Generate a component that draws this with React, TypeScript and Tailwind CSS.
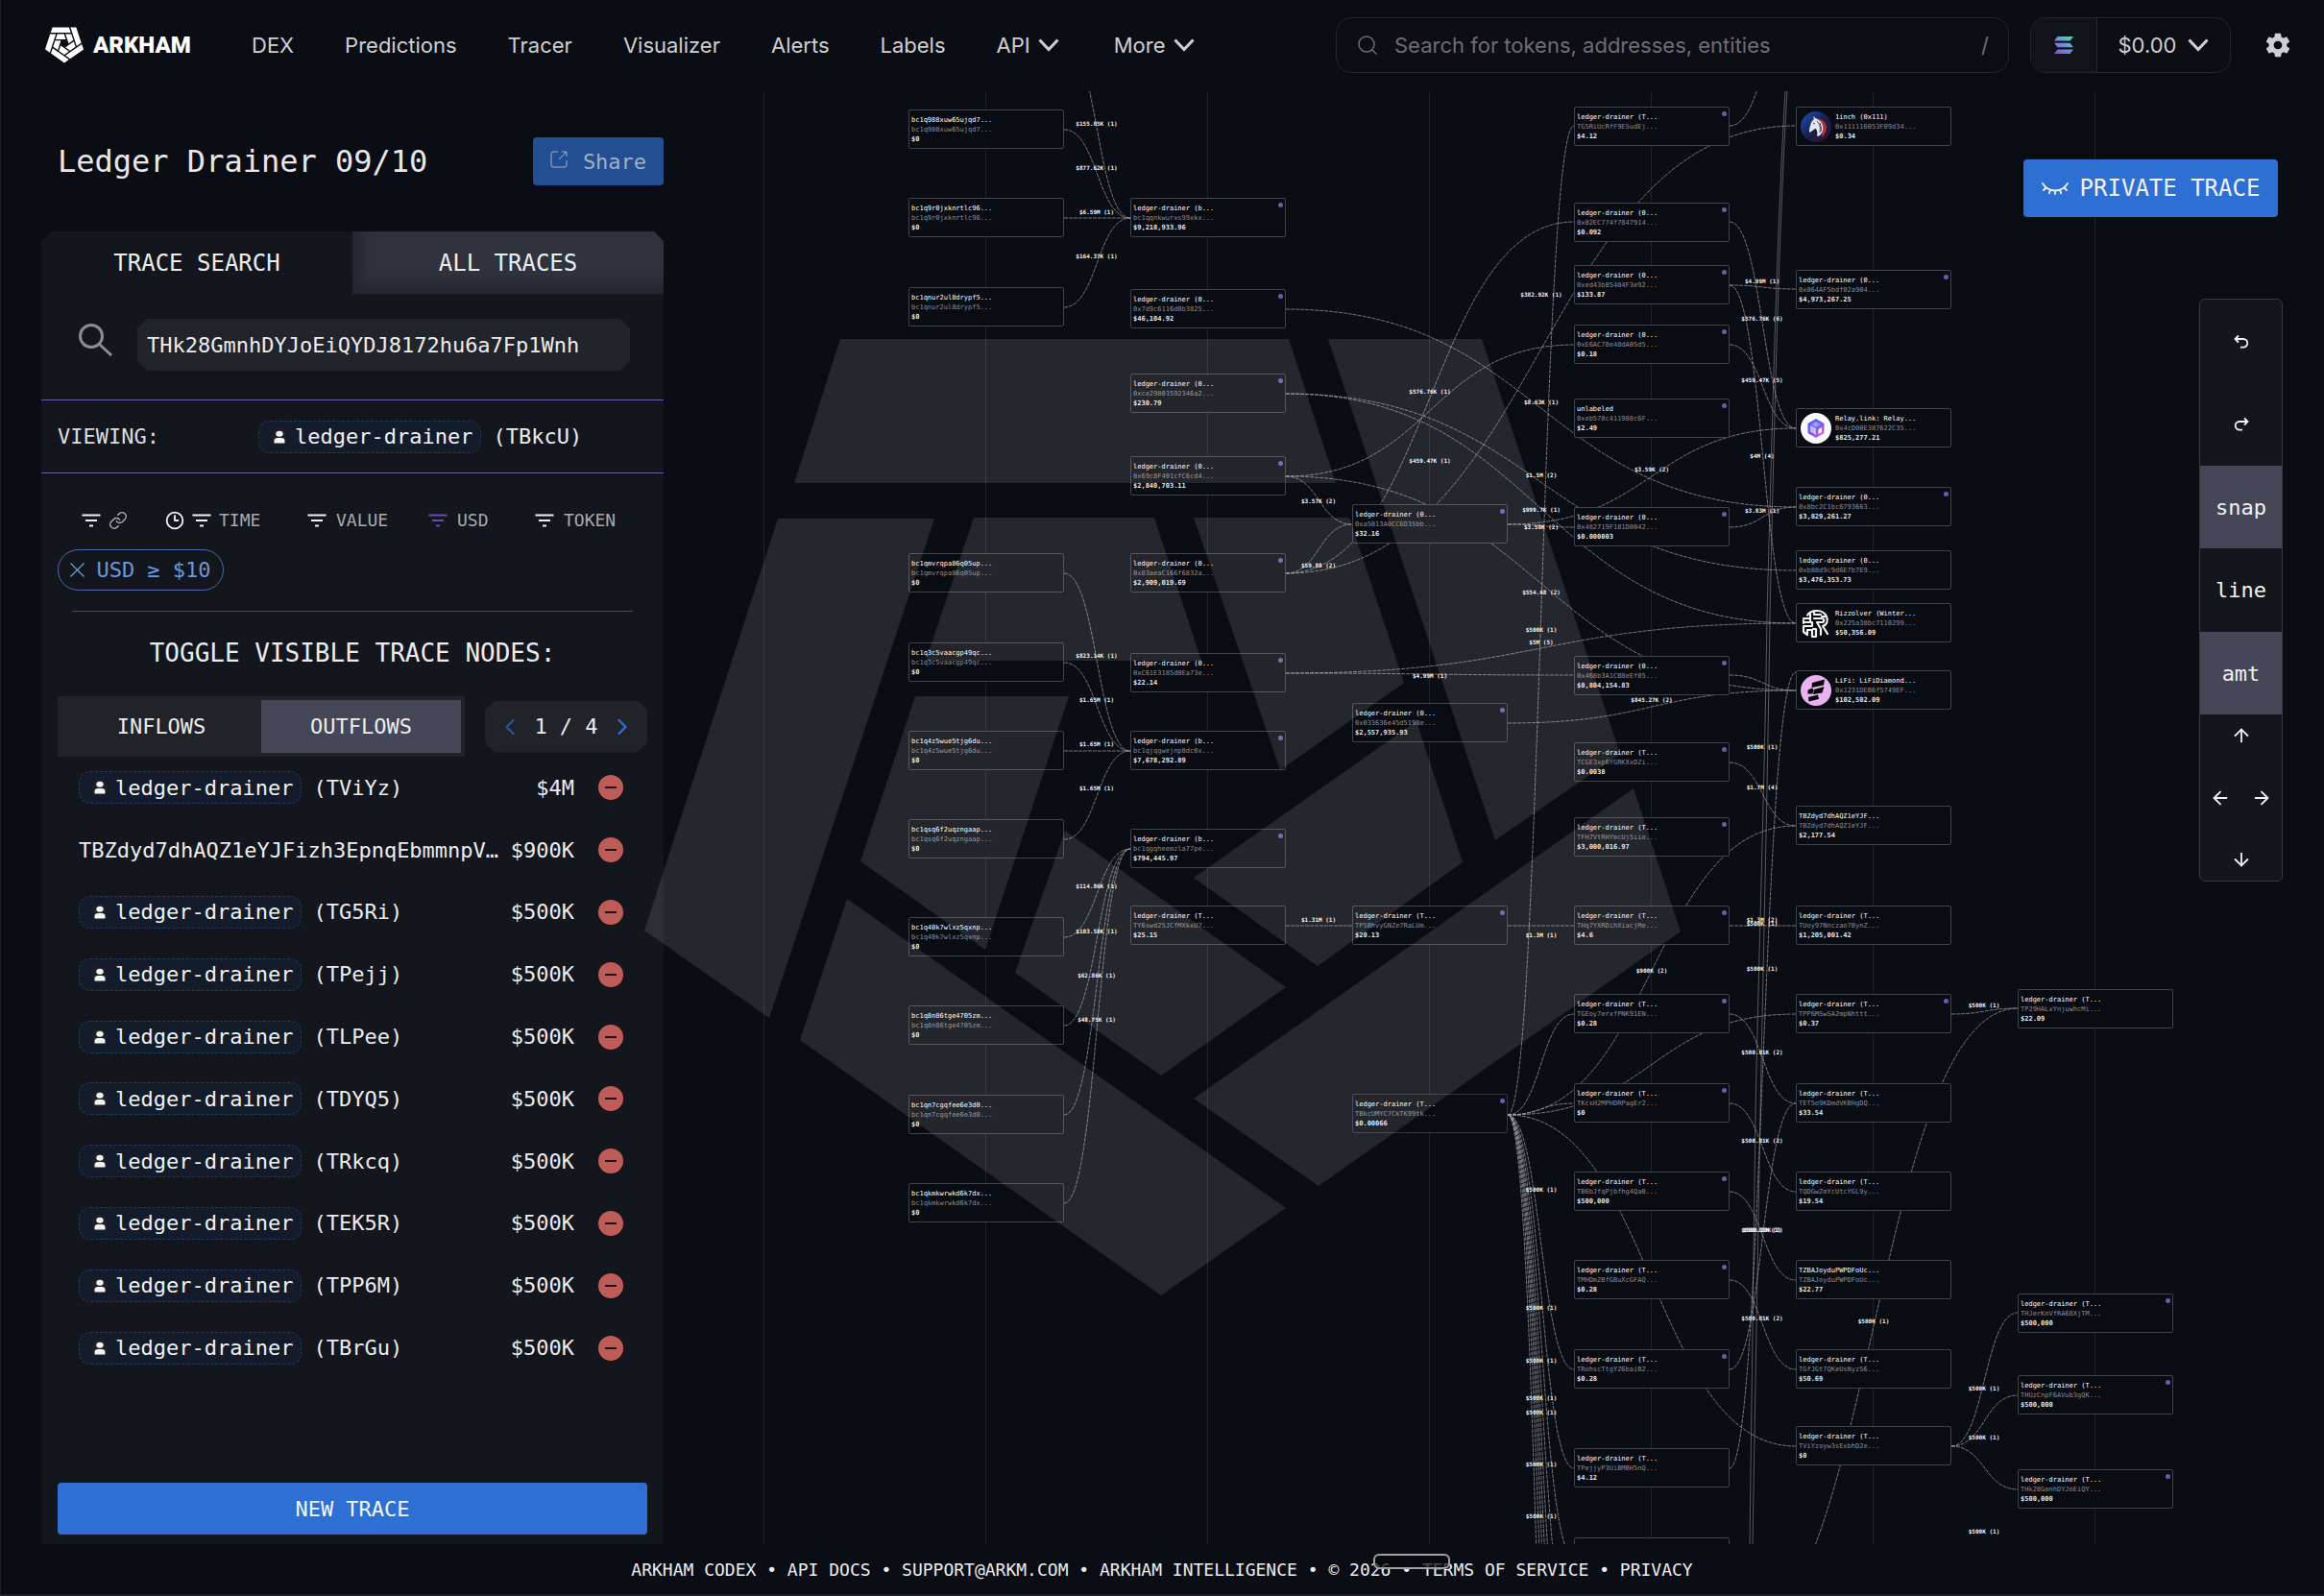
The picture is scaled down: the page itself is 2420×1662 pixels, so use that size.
import React from "react";
import { ArrowDown, ArrowLeft, ArrowRight, ArrowUp, ChevronLeft, ChevronRight, Clock3, Link, Search } from "lucide-react";
import { IoMdSettings } from "react-icons/io";

const SHIELD = [
  "875,353 1342,353 1391,503 827,503",
  "1383,353 1543,353 1687,785 1557,875",
  "1701,821 1750,970 1373,1235 1243,1144",
  "810,540 973,540 801,1060 671,969",
  "1014,539 1202,539 1251,688 964,688",
  "953,725 1113,725 1026,989 896,897",
  "882,936 1339,1258 1209,1349 833,1083",
  "1109,865 1339,1028 1209,1120 1057,1013",
  "1243,539 1405,539 1462,711 1333,802",
  "1475,751 1523,898 1372,1006 1243,914",
];

function Shield({ className }: { className: string }) {
  return (
    <svg viewBox="671 353 1079 996" className={className} fill="currentColor" aria-hidden="true">
      {SHIELD.map((p) => (
        <polygon key={p} points={p} />
      ))}
    </svg>
  );
}

function Caret() {
  return (
    <svg viewBox="0 0 22 14" className="h-3.5 w-[22px]" fill="none" stroke="currentColor" strokeWidth="3" aria-hidden="true">
      <path d="M1.500 1.500L11 11.500l9.500-10" />
    </svg>
  );
}

/* The canvas coordinate system starts this far down the page. */
const TOP = 95;

type NodeData = { x: number; y: number; name: string; addr: string; usd: string; dot?: boolean; icon?: string; active?: boolean };

const C1 = 946, C2 = 1177, C3 = 1408, C4 = 1639, C5 = 1870, C6 = 2101;

const btc = (y: number, addr: string): NodeData => ({ x: C1, y, name: addr, addr, usd: "$0" });
const drn = (x: number, y: number, net: string, addr: string, usd: string, dot = true): NodeData => ({
  x, y, name: `ledger-drainer (${net}...`, addr, usd, dot,
});

const NODES: NodeData[] = [
  btc(114, "bc1q988xuw65ujqd7..."),
  btc(206, "bc1q9r0jxknrtlc96..."),
  btc(299, "bc1qnur2ul8drypf5..."),
  btc(576, "bc1qmvrqpa86q05up..."),
  btc(669, "bc1q3c5vaacgp49qc..."),
  btc(761, "bc1q4z5wue5tjg6du..."),
  btc(853, "bc1qsq6f2uqzngaap..."),
  btc(955, "bc1q40k7wlxz5qxnp..."),
  btc(1047, "bc1q8n86tge4705zm..."),
  btc(1140, "bc1qn7cgqfee6e3d0..."),
  btc(1232, "bc1qkmkwrwkd6k7dx..."),
  drn(C2, 206, "b", "bc1qqnkwurxs99xkx...", "$9,218,933.96"),
  drn(C2, 301, "0", "0x7d9c6116d0b3825...", "$46,104.92"),
  drn(C2, 389, "0", "0xce29803592346a2...", "$230.79"),
  drn(C2, 475, "0", "0x69c8F401cfC6cd4...", "$2,840,703.11"),
  drn(C2, 576, "0", "0x83aeaC166f6832a...", "$2,909,019.69"),
  drn(C2, 680, "0", "0xC61E3185d0Ea73e...", "$22.14"),
  drn(C2, 761, "b", "bc1qjqgwejnp8dc0x...", "$7,678,292.89"),
  drn(C2, 863, "b", "bc1qgqheemzla77pe...", "$794,445.97"),
  drn(C2, 943, "T", "TY6swd25JCfMXkxU7...", "$25.15", false),
  drn(C3, 525, "0", "0xa5013A0CC6D35bb...", "$32.16"),
  drn(C3, 732, "0", "0x033636e45d5198e...", "$2,557,935.93"),
  drn(C3, 943, "T", "TP5BhvyGNZe7RaLUm...", "$20.13"),
  { ...drn(C3, 1139, "T", "TBkcUMYC7CkTK99tk...", "$0.00066"), active: true },
  drn(C4, 111, "T", "TG5RiUcRfF9ESudEj...", "$4.12"),
  drn(C4, 211, "0", "0x02EC774f7847914...", "$0.092"),
  drn(C4, 276, "0", "0xed43b85484F3e92...", "$133.87"),
  drn(C4, 338, "0", "0xE6AC78e48dA05d5...", "$0.18"),
  { x: C4, y: 415, name: "unlabeled", addr: "0xeb578c411908c6F...", usd: "$2.49", dot: true },
  drn(C4, 528, "0", "0x482719F181D0042...", "$0.000003"),
  drn(C4, 683, "0", "0x468b3A1CB8eEf05...", "$8,804,154.83"),
  drn(C4, 773, "T", "TCGE3xp6YGRKXxDZi...", "$0.0038"),
  drn(C4, 851, "T", "TFH7VtRHYmcUj5iio...", "$3,000,016.97"),
  drn(C4, 943, "T", "THq7YXRDihXiacjMe...", "$4.6"),
  drn(C4, 1035, "T", "TGEoy7erxfPNK91EN...", "$0.28"),
  drn(C4, 1128, "T", "TKcsH2MPHDRPagEr2...", "$0"),
  drn(C4, 1220, "T", "TB6bJfqPjbfhg4QaB...", "$500,000"),
  drn(C4, 1312, "T", "TMHDm2BfGBuXcGFAQ...", "$0.28"),
  drn(C4, 1405, "T", "TRohscTtgYZ6baiB2...", "$0.28"),
  drn(C4, 1508, "T", "TPejjyP3UiBMBH5nQ...", "$4.12", false),
  drn(C4, 1601, "T", "", "", false),
  { x: C5, y: 111, name: "1inch (0x111)", addr: "0x111116053F09d34...", usd: "$0.34", icon: "1inch" },
  drn(C5, 281, "0", "0x064AF5bdf02a904...", "$4,973,267.25"),
  { x: C5, y: 425, name: "Relay.link: Relay...", addr: "0x4cD00E387622C35...", usd: "$825,277.21", icon: "relay" },
  drn(C5, 507, "0", "0x8bc2C1bc6793663...", "$3,829,261.27"),
  drn(C5, 573, "0", "0xb88d9c9d6E7b7E9...", "$3,476,353.73", false),
  { x: C5, y: 628, name: "Rizzolver (Winter...", addr: "0x225a38bc7110299...", usd: "$50,356.09", icon: "rizz" },
  { x: C5, y: 698, name: "LiFi: LiFiDiamond...", addr: "0x1231DEB6f5749EF...", usd: "$102,502.09", icon: "lifi" },
  { x: C5, y: 839, name: "TBZdyd7dhAQZ1eYJF...", addr: "TBZdyd7dhAQZ1eYJF...", usd: "$2,177.54" },
  drn(C5, 943, "T", "TUoy97Nnczao7BynZ...", "$1,205,001.42", false),
  drn(C5, 1035, "T", "TPP6MSwSA2mpNhttt...", "$0.37"),
  drn(C5, 1128, "T", "TET5o9KDmdVKBHgDQ...", "$33.54", false),
  drn(C5, 1220, "T", "TQDGwZmYcUtcYGL9y...", "$19.54", false),
  { x: C5, y: 1312, name: "TZBAJoyduPWPDFoUc...", addr: "TZBAJoyduPWPDFoUc...", usd: "$22.77" },
  drn(C5, 1405, "T", "TGfJGt7QKeUsNyz56...", "$50.69", false),
  drn(C5, 1485, "T", "TViYzoyw3sExbhD2e...", "$0", false),
  drn(C6, 1030, "T", "TP29HALxYnjuwhcMi...", "$22.09", false),
  drn(C6, 1347, "T", "THJerKnVfRA68XjTM...", "$500,000"),
  drn(C6, 1432, "T", "THUzCnpF6AVub3gQK...", "$500,000"),
  drn(C6, 1530, "T", "THk28GmnhDYJoEiQY...", "$500,000"),
];

const EDGES: [number, number, number, number][] = [
  [1108, 43, 1177, 227], [1108, 135, 1177, 227], [1108, 227, 1177, 227], [1108, 320, 1177, 227],
  [1108, 597, 1177, 782], [1108, 690, 1177, 782], [1108, 782, 1177, 782], [1108, 874, 1177, 782],
  [1108, 976, 1177, 884], [1108, 1068, 1177, 884], [1108, 1161, 1177, 884], [1108, 1253, 1177, 884],
  [1339, 322, 1870, 528], [1339, 410, 1870, 594], [1339, 410, 1870, 649],
  [1339, 496, 1639, 359], [1339, 496, 1408, 546], [1339, 496, 1870, 719],
  [1339, 597, 1408, 546], [1339, 597, 1639, 231], [1339, 597, 1870, 131],
  [1570, 546, 1639, 549], [1570, 546, 1870, 446],
  [1339, 701, 1870, 649], [1339, 701, 1639, 703], [1570, 753, 1870, 719],
  [1570, 1161, 1639, 131], [1339, 964, 1408, 964], [1570, 964, 1639, 964], [1801, 964, 1870, 964],
  [1570, 1161, 1639, 1056], [1570, 1161, 1870, 860], [1570, 1161, 1870, 1056], [1570, 1161, 1639, 1149],
  [1570, 1161, 1870, 1506], [1570, 1161, 1639, 1426], [1570, 1161, 1639, 1529], [1570, 1161, 1639, 1622],
  [1570, 1161, 1639, 1715], [1570, 1161, 1639, 1808], [1570, 1161, 1639, 1900], [1570, 1161, 1639, 2008],
  [1570, 1161, 1639, 2160], [1570, 1161, 1639, 2400],
  [1801, 131, 1870, 20], [1801, 231, 1870, 446], [1801, 297, 1870, 301], [1801, 297, 1870, 649],
  [1801, 359, 1870, 446], [1801, 549, 1870, 528], [1801, 703, 1870, 719], [1801, 794, 1870, 860],
  [1801, 1056, 1870, 1149], [1801, 1149, 1870, 1241], [1801, 1241, 1870, 1333], [1801, 1333, 1870, 1426],
  [1801, 1426, 1870, 1149], [1801, 1529, 1870, 700],
  [2032, 1056, 2101, 1050], [1801, 1713, 2101, 1050],
  [2032, 1506, 2101, 1367], [2032, 1506, 2101, 1453], [2032, 1506, 2101, 1551],
];

/* Links whose two ends both lie outside the visible part of the canvas. */
const LONG_LINKS = [
  "M1861 95 C1852 250 1848 420 1843 640 C1841 800 1835 1050 1833 1160 L1825 1608",
  "M1859 95 C1850 250 1846 420 1840 640 C1838 800 1830 1050 1828 1160 L1822 1608",
];

const LABELS: [number, number, string][] = [
  [1142, 129, "$155.85K (1)"], [1142, 175, "$877.62K (1)"], [1142, 221, "$6.59M (1)"], [1142, 267, "$164.37K (1)"],
  [1142, 683, "$823.14K (1)"], [1142, 729, "$1.65M (1)"], [1142, 775, "$1.65M (1)"], [1142, 821, "$1.65M (1)"],
  [1142, 923, "$114.86K (1)"], [1142, 970, "$103.58K (1)"], [1142, 1016, "$62.86K (1)"], [1142, 1062, "$48.75K (1)"],
  [1373, 522, "$3.57K (2)"], [1373, 589, "$59.88 (2)"], [1373, 958, "$1.31M (1)"],
  [1489, 408, "$576.76K (1)"], [1489, 480, "$459.47K (1)"], [1489, 704, "$4.99M (1)"],
  [1605, 307, "$382.92K (1)"], [1605, 419, "$8.63K (1)"], [1605, 495, "$1.5M (2)"], [1605, 531, "$999.7K (1)"],
  [1605, 549, "$3.58K (2)"], [1605, 617, "$554.68 (2)"], [1605, 656, "$500K (1)"], [1605, 669, "$5M (5)"],
  [1605, 974, "$1.3M (1)"], [1605, 1239, "$500K (1)"], [1605, 1362, "$500K (1)"], [1605, 1417, "$500K (1)"],
  [1605, 1456, "$500K (1)"], [1605, 1471, "$500K (1)"], [1605, 1525, "$500K (1)"], [1605, 1579, "$500K (1)"],
  [1720, 489, "$3.59K (2)"], [1720, 729, "$845.27K (2)"], [1720, 1011, "$900K (2)"],
  [1835, 293, "$4.99M (1)"], [1835, 332, "$576.76K (6)"], [1835, 396, "$459.47K (5)"], [1835, 475, "$4M (4)"],
  [1835, 532, "$3.83M (1)"], [1835, 778, "$500K (1)"], [1835, 820, "$1.7M (4)"], [1835, 958, "$1.3M (2)"],
  [1835, 962, "$500K (1)"], [1835, 1009, "$500K (1)"], [1835, 1096, "$500.01K (2)"], [1835, 1188, "$500.01K (2)"],
  [1835, 1281, "$500.01K (2)"], [1835, 1281, "$500.28K(1)"], [1835, 1373, "$500.01K (2)"],
  [1951, 1376, "$500K (1)"], [2066, 1047, "$500K (1)"], [2066, 1446, "$500K (1)"], [2066, 1497, "$500K (1)"],
  [2066, 1595, "$500K (1)"],
];

function TokenIcon({ kind }: { kind: string }) {
  return (
    <svg viewBox="0 0 32 32" className="size-8 shrink-0" aria-hidden="true">
      {kind === "1inch" && (
        <>
          <defs>
            <linearGradient id="inch" x1="0" y1="0" x2="1" y2="1">
              <stop offset="0" stopColor="#2453b5" />
              <stop offset="0.5" stopColor="#17204f" />
              <stop offset="1" stopColor="#3a0f22" />
            </linearGradient>
          </defs>
          <circle cx="16" cy="16" r="16" fill="url(#inch)" />
          <path d="M15 7c7 0 11 4 12 9 0 5-2 8-5 11 1-7 0-14-7-20z" fill="#b5303f" />
          <path d="M9 19c1-5 2-9 5-11l-1-3 4 3c5 2 7 7 6 12-1 3-3 6-6 6 1-4 0-6-1-8-2 0-3 2-5 3l-2 1z" fill="#e3e7ee" />
          <path d="M17 10c3 3 4 7 3 12M13 12l2 1M20 12c1 3 2 6 1 9" stroke="#27305a" strokeWidth="0.900" fill="none" />
        </>
      )}
      {kind === "relay" && (
        <>
          <defs>
            <linearGradient id="relay" x1="0" y1="0" x2="1" y2="1">
              <stop offset="0" stopColor="#3f6bff" />
              <stop offset="0.5" stopColor="#7c4dff" />
              <stop offset="1" stopColor="#ff5fd0" />
            </linearGradient>
          </defs>
          <circle cx="16" cy="16" r="16" fill="#fafafa" />
          <path d="M16 6l8.500 5v10L16 26l-8.500-5V11z" fill="url(#relay)" />
          <path d="M10 13l6 3v7l-6-3.500z" fill="#c9b8ff" />
          <path d="M16 9l5 3-5 3-5-3z" fill="#8fa6ff" />
          <path d="M18.500 17l3.500-2v5l-3.500 2z" fill="#fafafa" />
        </>
      )}
      {kind === "rizz" && (
        <>
          <circle cx="16" cy="16" r="14" fill="#07090e" />
          <path
            d="M3 11h7V6M3 16v-3M7 7.500c2-3 6-4.500 10-4.500s8 2 10 6c2 5 0 9-4 10l5 8M14 3v4h7M14 11h8c3 0 3 4 0 4h-5l4 7v6M10 10v5H3M3 19h9v-4M3 19v6l4 3v-5h5v7h4v-8h-3M27 9h-5"
            fill="none" stroke="#f4f4f4" strokeWidth="2.200" strokeLinejoin="round" strokeLinecap="round"
          />
        </>
      )}
      {kind === "lifi" && (
        <>
          <circle cx="16" cy="16" r="16" fill="#e9b3f2" />
          <path
            d="M12 8l13-3.500-1 6-12.500 2.500zM7.500 15.500l4.500-2 1.500 1.500-1 4.500h-5zM14 15l10.500-3-2 6.500L13 20zM8 23l10-2.500 1 4.500-10.500 2.500z"
            fill="#07050a"
          />
        </>
      )}
    </svg>
  );
}

function TraceNode({ n }: { n: NodeData }) {
  return (
    <div
      className={`absolute flex h-[41px] w-[162px] items-center gap-1 rounded-[2px] border bg-[#090c13] text-[7px] leading-[10px] ${
        n.active ? "border-[#373055]" : "border-[#40434a]"
      } ${n.icon ? "pl-1" : "pl-0.5"}`}
      style={{ left: n.x, top: n.y - TOP }}
    >
      {n.icon && <TokenIcon kind={n.icon} />}
      <div>
        <div className="h-2.5 text-white">{n.name}</div>
        <div className="h-2.5 text-[#8b8d93]">{n.addr}</div>
        <div className="h-2.5 font-bold text-[#e4e4e6]">{n.usd}</div>
      </div>
      {n.dot && <span className="absolute right-0.5 top-1 size-[5px] rounded-full bg-[#6d59b0]" />}
    </div>
  );
}

function TraceCanvas() {
  return (
    <div className="absolute inset-0 overflow-hidden">
      <svg viewBox="0 95 2420 1513" className="absolute left-0 top-0 h-[1513px] w-[2420px] max-w-none" fill="none" aria-hidden="true">
        {[796, 1027, 1258, 1489, 1720, 1951, 2182].map((x) => (
          <path key={x} d={`M${x - 0.5} 95V1608`} stroke="#20232a" />
        ))}
        <g stroke="#a3a4a8" strokeWidth="0.700">
          {EDGES.map(([x1, y1, x2, y2], i) => {
            const m = (x1 + x2) / 2;
            return <path key={i} d={`M${x1} ${y1}C${m} ${y1} ${m} ${y2} ${x2} ${y2}`} strokeDasharray="4 1" />;
          })}
          {LONG_LINKS.map((d) => (
            <path key={d} d={d} strokeWidth="0.500" />
          ))}
        </g>
      </svg>
      {NODES.map((n) => (
        <TraceNode key={`${n.x}-${n.y}`} n={n} />
      ))}
      {LABELS.map(([x, y, t], i) => (
        <span
          key={i}
          className="absolute -translate-x-1/2 whitespace-nowrap text-[6px] font-bold leading-[8px] text-[#f4f4f5]"
          style={{ left: x, top: y - TOP - 4 }}
        >
          {t}
        </span>
      ))}
    </div>
  );
}

function FilterLines({ className = "text-[#f2f2f3]" }: { className?: string }) {
  return (
    <svg viewBox="0 0 20 14" className={`h-3.5 w-5 ${className}`} stroke="currentColor" strokeWidth="2" aria-hidden="true">
      <path d="M0.500 1.500h19M4 7h12M8 12.500h4" />
    </svg>
  );
}

function Entity({ code }: { code: string }) {
  return (
    <span className="flex items-center">
      <a href="#entity" className="flex h-[34px] items-center rounded-xl border border-dashed border-[#1f3a5f] bg-[#141c2b] pl-3 pr-2 text-[#f0f1f3]">
        <span className="mr-2 flex size-[17px] items-center justify-center rounded-full bg-[#1f2025]">
          <svg viewBox="1 0 12 17" className="h-3.5 w-3" fill="#f3f3f3" preserveAspectRatio="none" aria-hidden="true">
            <circle cx="7" cy="4.500" r="3.700" />
            <path d="M1.500 16.500v-3a3.700 3.700 0 0 1 3.700-3.700h3.600a3.700 3.700 0 0 1 3.700 3.700v3z" />
          </svg>
        </span>
        ledger-drainer
      </a>
      <span className="ml-3">({code})</span>
    </span>
  );
}

const ROWS: [string, string][] = [
  ["TViYz", "$4M"], ["", "$900K"], ["TG5Ri", "$500K"], ["TPejj", "$500K"], ["TLPee", "$500K"],
  ["TDYQ5", "$500K"], ["TRkcq", "$500K"], ["TEK5R", "$500K"], ["TPP6M", "$500K"], ["TBrGu", "$500K"],
];

function Sidebar() {
  return (
    <aside className="relative ml-[43px] flex w-[648px] shrink-0 flex-col pt-12 text-[22px] text-[#ececee]">
      <div className="flex h-[50px] items-center justify-between">
        <h1 className="pl-[17px] text-[32px] text-[#e8e8ea]">Ledger Drainer 09/10</h1>
        <button className="flex h-[50px] w-[136px] items-center justify-center gap-4 rounded bg-[#224e93] text-[#a3afc6]">
          <svg viewBox="0 0 18 18" className="-mt-1 size-[18px]" fill="none" stroke="currentColor" strokeWidth="1" aria-hidden="true">
            <path d="M8 1H3a2 2 0 0 0-2 2v12a2 2 0 0 0 2 2h12a2 2 0 0 0 2-2v-5M9 9l8-8M12 1h5v5" />
          </svg>
          Share
        </button>
      </div>

      <section className="mt-12 flex flex-1 flex-col bg-[#13161d] [clip-path:polygon(10px_0,calc(100%-10px)_0,100%_10px,100%_100%,0_100%,0_10px)]">
        <div className="grid h-[65px] grid-cols-2 text-2xl" role="tablist">
          <button role="tab" aria-selected="true">TRACE SEARCH</button>
          <button role="tab" aria-selected="false" className="bg-[#30323d] shadow-[inset_10px_-10px_14px_#24262f]">ALL TRACES</button>
        </div>

        <div className="mt-[26px] flex items-start pl-[39px] pr-[35px]">
          <svg viewBox="0 0 35 34" className="mt-[5px] h-[34px] w-[35px]" fill="none" stroke="#8b8d93" strokeWidth="3" aria-hidden="true">
            <circle cx="13" cy="13" r="11.500" />
            <path d="M21 21l13 12" />
          </svg>
          <input
            aria-label="Trace address"
            defaultValue="THk28GmnhDYJoEiQYDJ8172hu6a7Fp1Wnh"
            className="ml-[26px] h-[54px] min-w-0 flex-1 bg-[#21242b] px-2.5 outline-none [clip-path:polygon(10px_0,calc(100%-10px)_0,100%_10px,100%_calc(100%-10px),calc(100%-10px)_100%,10px_100%,0_calc(100%-10px),0_10px)]"
          />
        </div>

        <div className="mt-[30px] flex h-[77px] items-center border-y border-[#6f5ea6] pl-[17px]">
          <span className="w-[209px] text-[#dcdcdf]">VIEWING:</span>
          <Entity code="TBkcU" />
        </div>

        <div className="mt-[35px] flex h-7 items-center pl-[42px] text-lg text-[#a9aaae]">
          <button aria-label="Filter by link" className="flex w-[87px] items-center gap-2">
            <FilterLines />
            <Link className="size-5" strokeWidth={1.8} />
          </button>
          <button className="flex w-[148px] items-center gap-2">
            <Clock3 className="size-5 text-[#f2f2f3]" strokeWidth={2.2} />
            <FilterLines />
            TIME
          </button>
          <button className="flex w-[126px] items-center gap-2.5">
            <FilterLines />
            VALUE
          </button>
          <button className="flex w-[111px] items-center gap-2.5">
            <FilterLines className="text-[#6a4fae]" />
            USD
          </button>
          <button className="flex items-center gap-2.5">
            <FilterLines />
            TOKEN
          </button>
        </div>

        <button className="ml-[17px] mt-4 flex h-[43px] w-[173px] items-center justify-center gap-3 rounded-full border border-[#4a6bad] text-[#6e97dd]">
          <svg viewBox="0 0 15 15" className="size-[15px]" stroke="currentColor" strokeWidth="1.300" aria-hidden="true">
            <path d="M0.500 0.500l14 14M14.500 0.500l-14 14" />
          </svg>
          USD ≥ $10
        </button>
        <hr className="mx-8 mt-[21px] border-[#4a4d54]" />

        <h2 className="mt-6 text-center text-[26px] leading-[38px]">TOGGLE VISIBLE TRACE NODES:</h2>

        <div className="mt-[26px] flex items-center justify-between px-[17px]">
          <div className="grid h-[63px] w-[424px] grid-cols-2 bg-[#212328] p-1">
            <button>INFLOWS</button>
            <button className="bg-[#454657]">OUTFLOWS</button>
          </div>
          <div className="flex h-[54px] w-[169px] items-center justify-between bg-[#212328] px-3 [clip-path:polygon(10px_0,calc(100%-10px)_0,100%_10px,100%_calc(100%-10px),calc(100%-10px)_100%,10px_100%,0_calc(100%-10px),0_10px)]">
            <button aria-label="Previous page"><ChevronLeft className="size-7" color="#29559d" strokeWidth={2} /></button>
            1 / 4
            <button aria-label="Next page"><ChevronRight className="size-7" color="#2d6fd2" strokeWidth={2} /></button>
          </div>
        </div>

        <ul className="grid h-[648px] auto-rows-fr pl-[39px] pr-[42px]">
          {ROWS.map(([code, usd]) => (
            <li key={code} className="flex min-w-0 items-center">
              {code ? <Entity code={code} /> : <span className="min-w-0 flex-1">TBZdyd7dhAQZ1eYJFizh3EpnqEbmmnpV…</span>}
              <span className={code ? "ml-auto" : "ml-2"}>{usd}</span>
              <button aria-label={`Hide ${code || "TBZdyd7"}`} className="ml-[25px] flex size-[26px] shrink-0 items-center justify-center rounded-full bg-[#c05c58]">
                <span className="h-0.5 w-3 bg-[#14171d]" />
              </button>
            </li>
          ))}
        </ul>

        <button className="mx-[17px] mb-2.5 mt-auto h-[54px] rounded bg-[#2d6fd2] text-[#f4f6fa]">NEW TRACE</button>
      </section>
    </aside>
  );
}

function Header() {
  return (
    <header className="flex h-[95px] items-start pl-[47px] pr-[33px] pt-[18px] font-['Inter',sans-serif] text-[22px] text-[#cfcfd2]">
      <div className="flex h-[58px] w-full items-center">
        <a href="#home" className="flex w-[215px] items-center gap-2.5 font-['Roboto',sans-serif] text-2xl font-black text-white">
          <Shield className="h-[38px] w-10" />
          ARKHAM
        </a>
        <nav className="flex items-center gap-[53px]">
          {["DEX", "Predictions", "Tracer", "Visualizer", "Alerts", "Labels"].map((t) => (
            <a key={t} href={`#${t}`}>{t}</a>
          ))}
          <button className="mr-1 flex items-center gap-2">API <Caret /></button>
          <button className="flex items-center gap-2">More <Caret /></button>
        </nav>
        <label className="ml-auto flex h-[58px] w-[701px] items-center rounded-2xl border border-[#23262d] bg-[#0d0d14] px-5 text-[#6b6e77]">
          <Search className="mr-4 size-6" strokeWidth={1.5} />
          <input aria-label="Search" placeholder="Search for tokens, addresses, entities" className="min-w-0 flex-1 outline-none placeholder:text-[#6b6e77]" />
          <span>/</span>
        </label>
        <div className="ml-[22px] flex h-[58px] w-[209px] overflow-hidden rounded-2xl border border-[#23262d] bg-[#0d0d14]">
          <button aria-label="Solana" className="flex w-[69px] items-center justify-center border-r border-[#23262d] bg-[#11121a]">
            <svg viewBox="0 0 20 18" className="h-[18px] w-5" aria-hidden="true">
              <defs>
                <linearGradient id="sol" x1="0" y1="1" x2="1" y2="0">
                  <stop offset="0" stopColor="#8a4be0" />
                  <stop offset="0.5" stopColor="#6f8fd6" />
                  <stop offset="1" stopColor="#4fe0a5" />
                </linearGradient>
              </defs>
              <path d="M3.500 0H20l-3.500 4.500H0zM0 6.700h16.500L20 11.200H3.500zM3.500 13.500H20L16.500 18H0z" fill="url(#sol)" />
            </svg>
          </button>
          <button className="flex flex-1 items-center justify-center gap-3">$0.00 <Caret /></button>
        </div>
        <button aria-label="Settings" className="ml-[34px]"><IoMdSettings className="size-[30px]" /></button>
      </div>
    </header>
  );
}

function Toolbar() {
  return (
    <div className="mt-[85px] w-[87px] overflow-hidden rounded-md border border-[#363940] bg-[#13161d] text-[22px] text-[#f2f2f3]">
      <button aria-label="Undo" className="flex h-[87px] w-full items-center justify-center">
        <svg viewBox="0 0 16 16" className="size-4" fill="none" stroke="currentColor" strokeWidth="1.800" aria-hidden="true">
          <path d="M5 1.500L1.500 5 5 8.500M1.500 5h8.500a4.300 4.300 0 0 1 0 8.600H7" />
        </svg>
      </button>
      <button aria-label="Redo" className="flex h-[86px] w-full items-center justify-center">
        <svg viewBox="0 0 16 16" className="size-4" fill="none" stroke="currentColor" strokeWidth="1.800" aria-hidden="true">
          <path d="M11 1.500L14.500 5 11 8.500M14.500 5H6a4.300 4.300 0 0 0 0 8.600h3" />
        </svg>
      </button>
      <button className="block h-[86px] w-full bg-[#454657]">snap</button>
      <button className="block h-[87px] w-full">line</button>
      <button className="block h-[86px] w-full bg-[#454657]">amt</button>
      <div className="flex h-[173px] flex-col items-center justify-between py-[11px]">
        <button aria-label="Pan up"><ArrowUp className="size-[22px]" strokeWidth={2} /></button>
        <div className="flex gap-[21px]">
          <button aria-label="Pan left"><ArrowLeft className="size-[22px]" strokeWidth={2} /></button>
          <button aria-label="Pan right"><ArrowRight className="size-[22px]" strokeWidth={2} /></button>
        </div>
        <button aria-label="Pan down"><ArrowDown className="size-[22px]" strokeWidth={2} /></button>
      </div>
    </div>
  );
}

export default function App() {
  return (
    <div className="flex min-h-screen flex-col bg-[#0a0d14] font-['DejaVu_Sans_Mono',monospace] shadow-[inset_1px_-2px_0_#1c1f25]">
      <Header />
      <main className="relative flex flex-1 justify-between">
        <TraceCanvas />
        <Sidebar />
        <div className="pointer-events-none absolute inset-0 overflow-hidden">
          <Shield className="absolute left-[671px] top-[258px] h-[996px] w-[1079px] max-w-none text-white/[0.11]" />
        </div>
        <div className="relative flex flex-col items-end pr-[43px] pt-[71px]">
          <button className="mr-[5px] flex h-[60px] w-[265px] items-center justify-center gap-3 rounded bg-[#2d6fd2] text-2xl text-[#f0f3f8]">
            <svg viewBox="0 0 28 13" className="h-[13px] w-7 shrink-0" fill="none" stroke="currentColor" strokeWidth="1.800" strokeLinecap="round" aria-hidden="true">
              <path d="M1 1c3 5 7.500 7.500 13 7.500S24 6 27 1M4.500 5.500L2 8M9 7.800l-1.200 3.400M14 8.500V12M19 7.800l1.200 3.400M23.500 5.500L26 8" />
            </svg>
            PRIVATE TRACE
          </button>
          <Toolbar />
        </div>
      </main>
      <footer className="relative flex h-[54px] items-center justify-center text-lg text-[#ececee]">
        <p className="whitespace-pre">
          <a href="#codex">ARKHAM CODEX</a> • <a href="#docs">API DOCS</a> • <a href="#support">SUPPORT@ARKM.COM</a> • ARKHAM INTELLIGENCE • © 2026 • <a href="#terms">TERMS OF SERVICE</a> • <a href="#privacy">PRIVACY</a>
        </p>
        <span className="absolute left-1/2 top-2.5 ml-[220px] h-4 w-20 rounded-md border-2 border-[#a0a1a4] bg-[#08090c]/70" />
      </footer>
    </div>
  );
}
